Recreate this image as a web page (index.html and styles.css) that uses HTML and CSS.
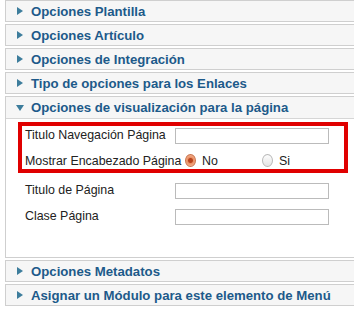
FILE: index.html
```html
<!DOCTYPE html>
<html lang="es">
<head>
    <meta charset="UTF-8">
    <title>Parámetros del elemento de menú</title>
    <link rel="stylesheet" href="styles.css">
</head>
<body>
    <div class="pane-sliders">
        <div class="panel">
            <h3 class="title"><span class="arrow"></span>Opciones Plantilla</h3>
        </div>
        <div class="panel">
            <h3 class="title"><span class="arrow"></span>Opciones Artículo</h3>
        </div>
        <div class="panel">
            <h3 class="title"><span class="arrow"></span>Opciones de Integración</h3>
        </div>
        <div class="panel">
            <h3 class="title"><span class="arrow"></span>Tipo de opciones para los Enlaces</h3>
        </div>
        <div class="panel open">
            <h3 class="title"><span class="arrow"></span>Opciones de visualización para la página</h3>
            <div class="content">
                <!-- resaltado en rojo -->
                <div class="highlight">
                    <div class="row">
                        <label>Titulo Navegación Página</label>
                        <input type="text">
                    </div>
                    <div class="row short">
                        <label>Mostrar Encabezado Página</label>
                        <div class="radios">
                            <span class="radio checked"></span><span class="opt">No</span>
                            <span class="radio"></span><span class="opt">Si</span>
                        </div>
                    </div>
                </div>
                <div class="row plain">
                    <label>Titulo de Página</label>
                    <input type="text">
                </div>
                <div class="row plain">
                    <label>Clase Página</label>
                    <input type="text">
                </div>
            </div>
        </div>
        <div class="panel">
            <h3 class="title"><span class="arrow"></span>Opciones Metadatos</h3>
        </div>
        <div class="panel">
            <h3 class="title"><span class="arrow"></span>Asignar un Módulo para este elemento de Menú</h3>
        </div>
    </div>
</body>
</html>
```

FILE: styles.css
```css
* {
    margin: 0;
    padding: 0;
    box-sizing: border-box;
}

body {
    background: #fff;
    font-family: 'Liberation Sans', Arial, sans-serif;
    font-size: 12.4px;
    color: #222;
    overflow: hidden;
}

.pane-sliders {
    margin: 0 0 0 5px;
    width: 360px;
}

.panel {
    border: 1px solid #cfcfcf;
    margin-bottom: 2px;
    background: #fff;
}

.title {
    height: 20px;
    display: flex;
    align-items: center;
    background: #f6f6f6;
    color: #1d5a8a;
    font-size: 13.2px;
    font-weight: bold;
    white-space: nowrap;
}

.arrow {
    width: 0;
    height: 0;
    margin: 0 8px 0 11px;
    border-top: 4px solid transparent;
    border-bottom: 4px solid transparent;
    border-left: 6px solid #3d7d9c;
}

.open .title {
    border-bottom: 1px solid #d6d6d6;
    height: 22px;
}

.open .arrow {
    margin: 0 7px 0 10px;
    border-left: 4px solid transparent;
    border-right: 4px solid transparent;
    border-top: 6px solid #3d7d9c;
    border-bottom: 0;
}

.content {
    height: 138px;
    padding-top: 3px;
}

.highlight {
    margin: 0 6px 4px 12px;
    outline: 4px solid #e00000;
    outline-offset: -4px;
    width: 330px;
}

.row {
    display: grid;
    grid-template-columns: 150px 154px;
    align-items: center;
    height: 26px;
    padding-left: 7px;
}

.row.short {
    height: 25px;
}

.row.plain {
    padding-left: 19px;
}

.row label {
    white-space: nowrap;
}

.row input {
    height: 16px;
    width: 154px;
    border: 1px solid #bbb;
    background: #fff;
    margin-top: 2px;
}

.radios {
    display: flex;
    align-items: center;
}

.radio {
    width: 13px;
    height: 13px;
    border-radius: 50%;
    border: 1px solid #b9b9b9;
    background: linear-gradient(#fdfdfd, #e4e4e4);
    margin: 0 6px 0 10px;
}

.radio.checked {
    border-color: #c9734c;
    background: radial-gradient(circle, #b8431c 0 2px, #e98f64 3px, #f7b796 6px);
}

.opt {
    width: 61px;
}
```
